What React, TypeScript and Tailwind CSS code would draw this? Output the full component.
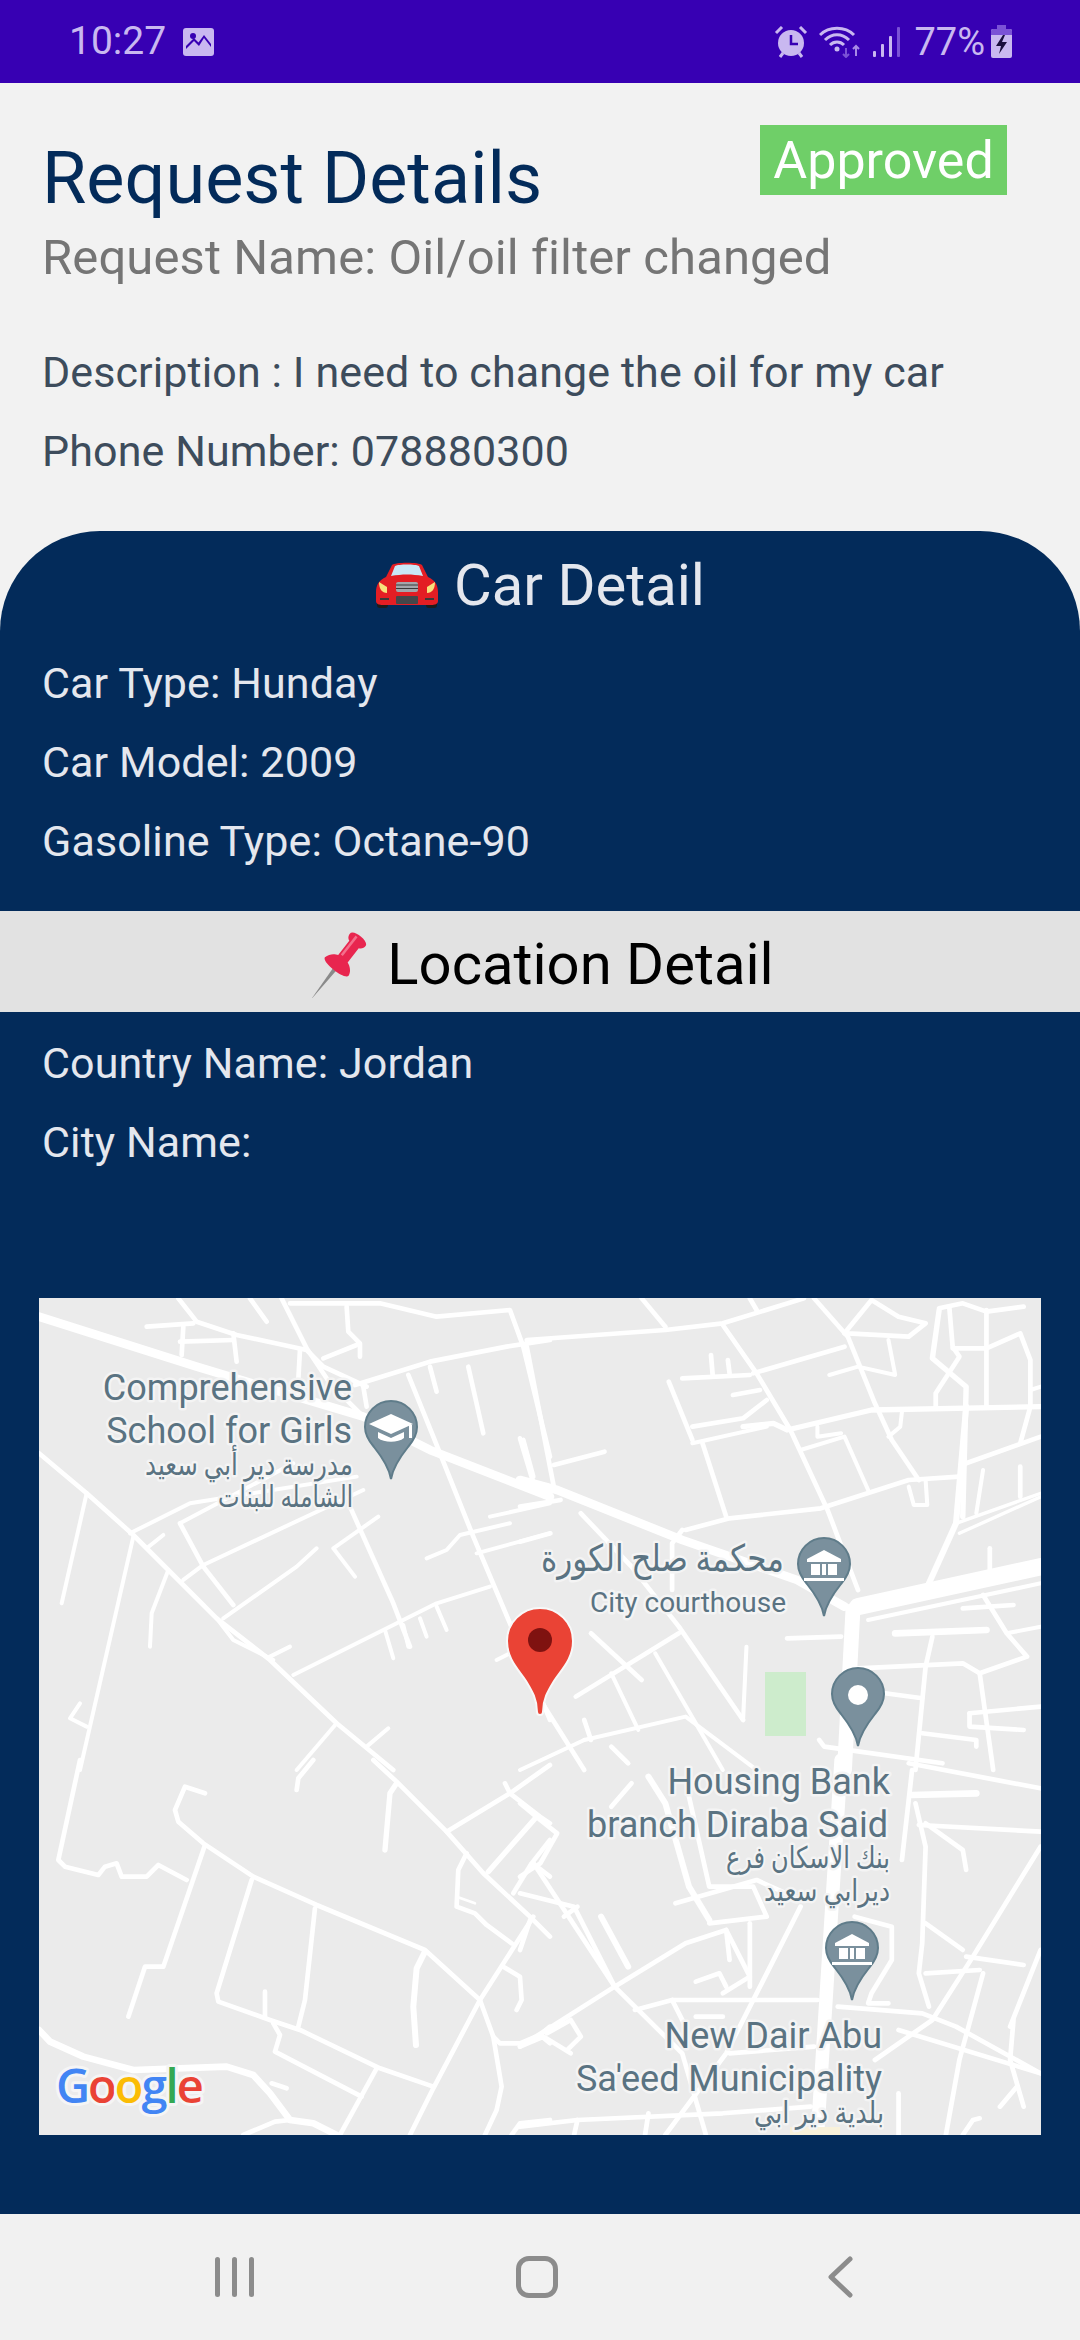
import React from "react";

type Road = [number, string];

// road traces, each group in its own crop coordinates
const roadsNW: Road[] = [
  [26, "27,80 500,230 1000,380 1200,480 1560,620"],
  [14, "445,25 500,95 620,135 830,180 880,230 1010,290"],
  [14, "350,110 490,100"],
  [14, "660,25 710,95"],
  [14, "755,25 830,175 900,280 1000,380"],
  [14, "780,40 1050,40 1220,80 1440,60 1480,170 1560,500"],
  [14, "950,50 955,125 990,160 990,200"],
  [14, "880,205 980,165"],
  [14, "810,180 805,270"],
  [14, "460,110 455,195"],
  [14, "610,130 620,215"],
  [14, "450,155 610,150"],
  [14, "975,285 1200,215 1430,170 1560,150"],
  [14, "1000,290 1010,350"],
  [14, "1135,255 1210,440 1330,740 1440,1000 1560,1290"],
  [14, "1200,230 1220,305"],
  [14, "1315,230 1360,430"],
  [14, "1480,450 1510,560"],
  [14, "27,490 170,610 310,735 560,985 720,1110 920,1300 1090,1440"],
  [12, "170,610 95,940"],
  [12, "310,740 150,1440"],
  [12, "415,840 365,970 360,1070"],
  [12, "300,730 480,640 980,560"],
  [14, "450,700 520,830 610,945"],
  [12, "450,700 790,520"],
  [12, "460,870 520,825 1000,600"],
  [12, "350,775 400,735"],
  [12, "580,985 800,830 860,775"],
  [12, "560,985 610,1050 730,1110"],
  [12, "720,1100 780,1070"],
  [12, "975,860 910,775 1045,680"],
  [14, "960,650 1090,940 1140,1070"],
  [12, "1190,805 1250,780 1290,735 1440,700"],
  [12, "1340,790 1560,730"],
  [12, "1380,680 1560,640"],
  [12, "790,1155 1060,1020 1220,940 1380,890"],
  [12, "1065,1020 1090,1105"],
  [12, "1120,1005 1135,1070"],
  [12, "1170,985 1190,1040"],
  [12, "1220,950 1250,1020"],
  [12, "920,1300 800,1440"],
  [12, "1010,1370 1075,1315"],
  [12, "150,1240 120,1285 170,1310"],
  [12, "1400,1110 1440,1090"],
];

const roadsNE: Road[] = [
  [26, "0,570 110,600 480,750 820,870 960,950"],
  [52, "1000,950 1541,830"],
  [44, "985,960 960,1440"],
  [14, "360,25 430,110"],
  [14, "680,25 700,60"],
  [14, "20,150 430,120 600,100 840,25"],
  [14, "600,105 700,250 800,420 910,660 1000,900"],
  [14, "870,25 970,140 1050,340 1100,450 1180,570"],
  [14, "960,130 1040,30 1120,80 1200,100 1150,140 970,130"],
  [14, "690,250 960,170"],
  [12, "1090,150 1110,255 1000,230 915,255"],
  [14, "480,265 680,255"],
  [14, "565,195 570,255"],
  [14, "615,210 620,250"],
  [14, "630,315 710,300"],
  [14, "440,275 510,450"],
  [14, "510,410 660,385 730,330"],
  [16, "660,410 750,400 790,420 1040,360 1541,350"],
  [12, "510,460 730,410"],
  [14, "540,460 610,680"],
  [12, "830,480 960,440 1030,600"],
  [12, "880,410 880,440 950,430"],
  [14, "490,720 620,685 890,655 1150,570 1300,560"],
  [14, "480,720 450,760 450,900"],
  [12, "1130,365 1125,410 1090,440"],
  [18, "1320,350 1290,700 1210,880"],
  [16, "1240,60 1220,205 1320,290 1310,680"],
  [14, "1270,50 1280,170 1300,200 1230,310 1230,350"],
  [14, "1380,60 1380,350"],
  [14, "1240,55 1310,40 1380,65 1490,50"],
  [14, "1280,175 1380,175 1480,130 1510,210 1510,350 1480,460"],
  [12, "1541,290 1510,300"],
  [14, "1320,520 1541,440"],
  [12, "1370,540 1350,670"],
  [14, "1480,530 1480,620"],
  [10, "1290,700 1541,610"],
  [10, "1300,730 1541,620"],
  [12, "1150,590 1165,645 1205,645 1200,570"],
  [14, "100,525 250,485"],
  [14, "0,650 120,630"],
  [14, "0,445 40,580"],
  [14, "20,170 100,590"],
  [14, "0,755 90,730"],
  [14, "180,670 330,830 470,1010 660,1290"],
  [14, "1390,775 1390,840"],
  [12, "1030,990 1541,880"],
  [14, "1310,955 1460,945"],
  [14, "1370,915 1440,1030 1500,1100 1360,1150 1310,1120 1000,1135"],
  [20, "1110,1030 1380,1020"],
  [14, "1220,1040 1200,1130 1170,1440"],
  [12, "1440,1030 1541,1010"],
  [14, "790,1045 950,1040"],
  [12, "670,1070 660,1290"],
  [14, "1360,1150 1400,1440"],
  [14, "1080,1210 1190,1225"],
  [14, "1330,1270 1541,1250"],
  [14, "1330,1270 1330,1310 1490,1320"],
  [14, "1190,1330 1350,1350 1350,1370"],
  [14, "885,1350 900,1370 1250,1420"],
  [14, "165,1220 470,1030"],
  [14, "210,1030 360,1170"],
  [12, "270,1150 350,1320"],
  [12, "190,1350 490,1280 700,1440"],
  [14, "60,1230 190,1440"],
  [14, "190,1290 210,1350"],
  [14, "270,1370 320,1420"],
  [12, "400,1090 520,1300 600,1440"],
  [12, "0,1440 190,1350"],
];

const roadsSW: Road[] = [
  [14, "150,0 85,300 105,320 205,345 225,320 260,310 275,350 350,350 385,315 470,360"],
  [14, "525,255 400,620 345,620 295,770"],
  [14, "525,100 465,80 435,150 445,185 520,250 670,350 860,435 1185,570 1350,720 1390,830 1415,980 1400,1050 1365,1125"],
  [14, "665,360 560,700 565,725 720,780 810,810 1050,925 1210,980"],
  [14, "855,445 825,720 805,800"],
  [14, "705,695 705,770"],
  [14, "730,790 750,825 735,875 995,1010"],
  [14, "1040,925 930,1125"],
  [14, "1510,470 1350,720 1210,985 1140,1125"],
  [18, "1185,575 1160,625 1150,740 1158,855"],
  [14, "850,0 805,55 800,90"],
  [14, "1030,0 1100,65 1250,215 1360,340 1500,470 1560,530"],
  [16, "1100,70 1080,100 1065,270"],
  [14, "1250,215 1440,100 1560,15"],
  [14, "1425,70 1440,100 1530,170 1560,190"],
  [16, "1520,170 1375,335"],
  [14, "1310,280 1285,330 1280,440 1335,460 1370,495 1445,550"],
  [8, "1280,410 1335,430"],
  [14, "1560,240 1505,310 1450,400"],
  [14, "1515,315 1560,350"],
  [14, "1420,620 1470,650 1475,720 1460,750"],
  [14, "1390,830 1410,850 1470,850 1530,825 1560,800"],
  [14, "1530,825 1560,850"],
  [20, "27,810 60,845 160,890 310,930 590,920 670,945 720,1000 780,1080 850,1090 920,1125"],
  [14, "725,970 770,985"],
  [14, "640,1125 735,1085 780,1080"],
  [14, "1445,1125 1470,1090 1560,1080"],
];

const roadsSE: Road[] = [
  [40, "950,0 880,1125"],
  [14, "1150,10 1540,85"],
  [14, "1160,30 1130,300"],
  [20, "1160,105 1350,100"],
  [14, "1180,195 1540,215"],
  [14, "1200,190 1310,270 1320,330"],
  [14, "1540,260 1340,590 1220,780 1050,900"],
  [14, "1170,130 1200,260 1190,550 1180,640 1210,740"],
  [14, "1200,490 1310,570"],
  [14, "1320,590 1490,615"],
  [14, "1370,640 1300,900 1260,1125"],
  [14, "1200,640 1360,630"],
  [14, "990,470 1100,500 1100,600 1040,700 1030,730 1090,730"],
  [14, "940,740 1190,760 1290,800 1540,940"],
  [14, "1460,780 1450,900 1490,1040"],
  [14, "1420,1040 1470,980"],
  [14, "1540,570 1450,800"],
  [14, "0,130 60,180 110,220 60,310 0,350"],
  [14, "40,310 280,680 0,860"],
  [14, "270,140 330,70"],
  [18, "380,50 430,130 500,380 560,480"],
  [14, "500,110 560,380 690,380 730,470 560,490"],
  [14, "460,430 700,360 830,420"],
  [18, "240,470 320,620"],
  [14, "280,680 490,550 610,510 620,600"],
  [14, "680,490 680,680"],
  [14, "520,665 590,640 610,680"],
  [14, "610,510 680,650 600,700"],
  [14, "830,440 610,880 430,1125"],
  [14, "0,400 160,440 280,680 480,880 550,1125"],
  [14, "30,480 0,570"],
  [14, "130,470 170,440"],
  [14, "0,860 70,830 150,880"],
  [14, "80,820 150,780 180,830 140,870"],
  [14, "340,750 450,720 620,720 880,720"],
  [14, "450,720 490,800"],
  [14, "520,770 600,770"],
  [14, "0,1100 170,1080 600,1060 860,1040"],
  [14, "170,1080 160,1125"],
  [14, "380,1060 370,1125"],
  [14, "620,880 870,860"],
  [14, "1120,810 1540,940"],
  [14, "1120,1000 1120,1125"],
  [14, "1310,1125 1340,1080 1360,1075"],
];

const pinPath =
  "M0 78C-2 66-9 56-17 46C-23 39-26 33-26 26A26 26 0 1 1 26 26C26 33 23 39 17 46C9 56 2 66 0 78Z";

function Roads({ list, transform }: { list: Road[]; transform: string }) {
  return (
    <g transform={transform} fill="none" stroke="#ffffff" strokeLinejoin="round" strokeLinecap="round">
      {list.map(([w, points], i) => (
        <polyline key={i} points={points} strokeWidth={w} />
      ))}
    </g>
  );
}

function GrayPin({ x, y, children }: { x: number; y: number; children?: React.ReactNode }) {
  return (
    <g transform={`translate(${x} ${y})`}>
      <path d={pinPath} fill="#7a909d" stroke="#5f7c8a" strokeWidth="2" />
      {children}
    </g>
  );
}

function BankGlyph() {
  return (
    <g fill="#ffffff">
      <path d="M0 12L17 21V24H-17V21Z" />
      <rect x="-13" y="26" width="9" height="11" />
      <rect x="-2" y="26" width="4" height="11" />
      <rect x="4" y="26" width="9" height="11" />
      <rect x="-20" y="40" width="40" height="3" />
    </g>
  );
}

function MapLabel({
  x,
  y,
  size = 36,
  len,
  children,
}: {
  x: number;
  y: number;
  size?: number;
  len?: number;
  children: React.ReactNode;
}) {
  return (
    <text
      x={x}
      y={y}
      textAnchor="end"
      fontSize={size}
      textLength={len}
      lengthAdjust={len ? "spacingAndGlyphs" : undefined}
      fill="#5a7382"
      stroke="#f4f4f4"
      strokeWidth="5"
      paintOrder="stroke"
      strokeLinejoin="round"
      fontFamily="Roboto, 'DejaVu Sans', sans-serif"
    >
      {children}
    </text>
  );
}

function MapView() {
  return (
    <svg viewBox="39 1298 1002 837" className="block w-[1002px] h-[837px] bg-[#ebebeb]">
      <Roads list={roadsNW} transform="translate(30 1290) scale(0.3333)" />
      <Roads list={roadsNE} transform="translate(520 1290) scale(0.338 0.3333)" />
      <Roads list={roadsSW} transform="translate(30 1760) scale(0.3333)" />
      <Roads list={roadsSE} transform="translate(520 1760) scale(0.338 0.3333)" />
      <rect x="765" y="1672" width="41" height="64" fill="#cdeccc" />
      <rect x="790" y="2127" width="50" height="8" fill="#f8f1da" />

      <MapLabel x={352} y={1400}>Comprehensive</MapLabel>
      <MapLabel x={352} y={1443}>School for Girls</MapLabel>
      <MapLabel x={353} y={1475} size={30} len={208}>مدرسة دير أبي سعيد</MapLabel>
      <MapLabel x={353} y={1507} size={30} len={135}>الشامله للبنات</MapLabel>
      <MapLabel x={784} y={1571} size={37} len={243}>محكمة صلح الكورة</MapLabel>
      <MapLabel x={786} y={1612} size={28}>City courthouse</MapLabel>
      <MapLabel x={890} y={1794}>Housing Bank</MapLabel>
      <MapLabel x={888} y={1837}>branch Diraba Said</MapLabel>
      <MapLabel x={890} y={1868} size={30} len={164}>بنك الاسكان فرع</MapLabel>
      <MapLabel x={890} y={1901} size={30} len={126}>ديرابي سعيد</MapLabel>
      <MapLabel x={882} y={2048}>New Dair Abu</MapLabel>
      <MapLabel x={882} y={2091}>Sa'eed Municipality</MapLabel>
      <MapLabel x={884} y={2123} size={30} len={130}>بلدية دير ابي</MapLabel>

      <GrayPin x={391} y={1401}>
        <path d="M0 13L22 23L0 33L-22 23Z" fill="#ffffff" />
        <path d="M-13 31V37C-7 42 7 42 13 37V31L0 37Z" fill="#ffffff" />
        <rect x="18" y="24" width="3" height="13" fill="#ffffff" />
      </GrayPin>
      <GrayPin x={824} y={1538}>
        <BankGlyph />
      </GrayPin>
      <GrayPin x={858} y={1668}>
        <circle cx="0" cy="27" r="10" fill="#ffffff" />
      </GrayPin>
      <GrayPin x={852} y={1922}>
        <BankGlyph />
      </GrayPin>

      <g transform="translate(540 1607)">
        <path
          d="M-3 105C-3 92-8 84-14 74C-22 62-33 52-33 34A33 33 0 1 1 33 34C33 52 22 62 14 74C8 84 3 92 3 105A3 3 0 0 1-3 105Z"
          fill="#ea4335"
          stroke="#f8f8f8"
          strokeWidth="2"
        />
        <circle cx="0" cy="33" r="12" fill="#7f1210" />
      </g>

      <text
        x="56"
        y="2103"
        fontSize="47"
        fontWeight="600"
        fontFamily="'Open Sans', Roboto, sans-serif"
        stroke="#f5f5f5"
        strokeWidth="6"
        strokeLinejoin="round"
        paintOrder="stroke"
        letterSpacing="-2"
      >
        <tspan fill="#4285f4">G</tspan>
        <tspan fill="#ea4335">o</tspan>
        <tspan fill="#fbbc05">o</tspan>
        <tspan fill="#4285f4">g</tspan>
        <tspan fill="#34a853">l</tspan>
        <tspan fill="#ea4335">e</tspan>
      </text>
    </svg>
  );
}

function CarEmoji() {
  return (
    <svg viewBox="0 0 64 46" className="w-[64px] h-[46px] shrink-0">
      <rect x="2" y="36" width="11" height="10" rx="3" fill="#1c1c1c" />
      <rect x="51" y="36" width="11" height="10" rx="3" fill="#1c1c1c" />
      <path d="M17 3C20 0 44 0 47 3L53 15C60 18 63 23 63 30V39C63 42 60 43 56 43H8C4 43 1 42 1 39V30C1 23 4 18 11 15Z" fill="#e31e24" />
      <path d="M20 4C24 2 40 2 44 4L48 14C37 12 27 12 16 14Z" fill="#c9e8f7" />
      <path d="M4 20L12 25L12 31C7 31 4 27 4 20Z" fill="#f7e27c" />
      <path d="M60 20L52 25L52 31C57 31 60 27 60 20Z" fill="#f7e27c" />
      <rect x="21" y="20" width="22" height="10" rx="2" fill="#a3a6aa" />
      <path d="M21 23H43M21 26.500H43" stroke="#3a3a3a" strokeWidth="1.200" />
      <rect x="21" y="34" width="22" height="8" rx="1" fill="#45474a" />
      <path d="M5 37H14M50 37H59" stroke="#3a3a3a" strokeWidth="2" />
    </svg>
  );
}

function PinEmoji() {
  return (
    <svg viewBox="0 0 66 66" className="w-[66px] h-[66px] shrink-0">
      <g transform="translate(32 33) rotate(38)">
        <path d="M-2 6L0 44L2 6Z" fill="#8a8a8a" />
        <path d="M-15 2C-14-4-9-7-6-8L-6-26C-9-27-10-30-10-32C-10-38 10-38 10-32C10-30 9-27 6-26L6-8C9-7 14-4 15 2C15 8-15 8-15 2Z" fill="#e8264f" />
        <path d="M-3-34V-10" stroke="#f4708c" strokeWidth="2.500" fill="none" />
      </g>
    </svg>
  );
}

function InfoRow({ children }: { children: React.ReactNode }) {
  return <div className="h-[79px] flex items-center text-[43px] tracking-[0.1px]">{children}</div>;
}

function StatusBar() {
  return (
    <div className="h-[83px] bg-[#3700b3] flex items-center justify-between pl-[69px] pr-[68px] text-[#c9b8f0] text-[38px] leading-none">
      <div className="flex items-center gap-[17px]">
        <span className="text-[39px]">10:27</span>
        <svg viewBox="0 0 31 28" className="w-[31px] h-[28px]">
          <path d="M3 0H28A3 3 0 0 1 31 3V25A3 3 0 0 1 28 28H3A3 3 0 0 1 0 25V3A3 3 0 0 1 3 0Z" fill="currentColor" />
          <circle cx="10" cy="8" r="3" fill="#3700b3" />
          <path d="M3 21L11 13L16 18L21 10L28 19V16L21 7L15.500 14.500L11 10L3 18Z" fill="#3700b3" />
        </svg>
      </div>
      <div className="flex items-center">
        <svg viewBox="0 0 34 32" className="w-[34px] h-[32px]">
          <circle cx="17" cy="17" r="13" fill="currentColor" />
          <path d="M17 9V18H24" stroke="#3700b3" strokeWidth="2.500" fill="none" />
          <path d="M2 7L8 1M32 7L26 1" stroke="currentColor" strokeWidth="3" />
          <path d="M6 31L9 27M28 31L25 27" stroke="currentColor" strokeWidth="3" />
        </svg>
        <svg viewBox="0 0 42 32" className="w-[42px] h-[32px] ml-[11px]">
          <path d="M1 9C10 0 26 0 35 9" stroke="currentColor" strokeWidth="3" fill="none" />
          <path d="M6 14C13 7 23 7 30 14" stroke="currentColor" strokeWidth="3" fill="none" />
          <path d="M11 19C15 15 21 15 25 19" stroke="currentColor" strokeWidth="3" fill="none" />
          <circle cx="18" cy="23" r="2.500" fill="currentColor" />
          <path d="M27 22V31M24 28L27 31L30 28" stroke="#7b52d6" strokeWidth="2" fill="none" />
          <path d="M37 30V20M34 23L37 20L40 23" stroke="#a88be6" strokeWidth="2" fill="none" />
        </svg>
        <svg viewBox="0 0 27 30" className="w-[27px] h-[30px] ml-[12px]">
          <rect x="0" y="24" width="3" height="6" rx="1" fill="currentColor" />
          <rect x="8" y="17" width="3" height="13" rx="1" fill="currentColor" />
          <rect x="16" y="9" width="3" height="21" rx="1" fill="currentColor" />
          <rect x="24" y="0" width="3" height="30" rx="1" fill="#7b52d6" />
        </svg>
        <span className="ml-[14px]">77%</span>
        <svg viewBox="0 0 21 33" className="w-[21px] h-[33px] ml-[6px]">
          <rect x="6" y="0" width="9" height="5" fill="#7b52d6" />
          <rect x="0" y="4" width="21" height="29" rx="2" fill="currentColor" />
          <path d="M2 4H19A2 2 0 0 1 21 6V10H0V6A2 2 0 0 1 2 4Z" fill="#7b52d6" />
          <path d="M12 10L5 21H10L8 29L16 17H11L14 10Z" fill="#1b0f3d" />
        </svg>
      </div>
    </div>
  );
}

function NavBar() {
  return (
    <div className="h-[126px] bg-[#f1f1f1] relative flex items-center justify-center">
      <div className="flex items-center gap-[12px] absolute left-[215px]">
        <div className="w-[5px] h-[40px] rounded-full bg-[#8c8c8c]" />
        <div className="w-[5px] h-[40px] rounded-full bg-[#8c8c8c]" />
        <div className="w-[5px] h-[40px] rounded-full bg-[#8c8c8c]" />
      </div>
      <div className="absolute left-[516px] w-[42px] h-[42px] rounded-[13px] border-[5px] border-[#8c8c8c]" />
      <svg viewBox="0 0 26 42" className="absolute left-[827px] w-[26px] h-[42px]">
        <path d="M23 3L4 21L23 39" stroke="#8c8c8c" strokeWidth="5" fill="none" strokeLinecap="round" strokeLinejoin="round" />
      </svg>
    </div>
  );
}

export default function App() {
  return (
    <div className="w-[1080px] h-[2340px] flex flex-col bg-[#f2f2f2] font-['Roboto',sans-serif] overflow-hidden">
      <StatusBar />

      <div className="h-[448px] bg-[#f2f2f2] px-[42px]">
        <div className="flex items-start justify-between pt-[42px] pr-[31px]">
          <div className="pt-[12px]">
            <div className="text-[72px] leading-[84px] text-[#032b5a]">Request Details</div>
          </div>
          <div className="w-[247px] h-[70px] bg-[#6fcf68] text-white text-[52px] pt-[2px] flex items-center justify-center">
            Approved
          </div>
        </div>
        <div className="text-[49px] leading-[56px] tracking-[0.1px] mt-[9px] text-[#757575]">
          Request Name: Oil/oil filter changed
        </div>
        <div className="mt-[47px] text-[#3d4c5c]">
          <InfoRow>Description : I need to change the oil for my car</InfoRow>
          <InfoRow>Phone Number: 078880300</InfoRow>
        </div>
      </div>

      <div className="h-[380px] bg-[#032b5a] rounded-t-[100px] text-[#e4e7ee]">
        <div className="flex items-center justify-center gap-[15px] pt-[23px] h-[85px] text-[58px] leading-[64px]">
          <CarEmoji />
          <span>Car Detail</span>
        </div>
        <div className="px-[42px] mt-[28px]">
          <InfoRow>Car Type: Hunday</InfoRow>
          <InfoRow>Car Model: 2009</InfoRow>
          <InfoRow>Gasoline Type: Octane-90</InfoRow>
        </div>
      </div>

      <div className="h-[101px] bg-[#e2e2e2] flex items-center justify-center gap-[15px] pt-[6px] text-[58px] text-black">
        <PinEmoji />
        <span>Location Detail</span>
      </div>

      <div className="flex-1 bg-[#032b5a] text-[#e4e7ee]">
        <div className="px-[42px] pt-[12px]">
          <InfoRow>Country Name: Jordan</InfoRow>
          <InfoRow>City Name:</InfoRow>
        </div>
        <div className="ml-[39px] mt-[116px]">
          <MapView />
        </div>
      </div>

      <NavBar />
    </div>
  );
}
